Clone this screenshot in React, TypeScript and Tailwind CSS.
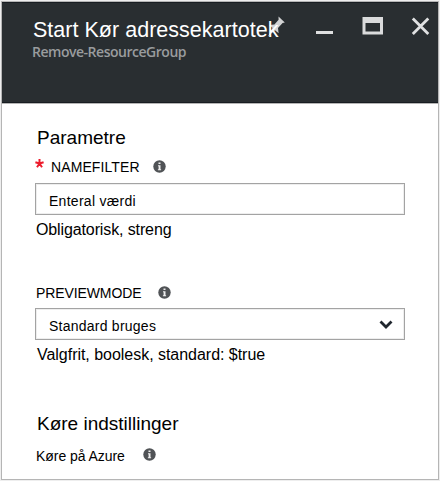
function InfoIcon() {
  return (
    <svg width="13" height="13" viewBox="0 0 13 13" className="block shrink-0">
      <circle cx="6.5" cy="6.5" r="6.2" fill="#505356" />
      <path d="M5.5 2.5h2v1.6h-2zM5 5.2h2.5v4.1h.6v1H4.9v-1h.7V6.2H5z" fill="#eeeeee" />
    </svg>
  );
}

function Header() {
  return (
    <header className="relative h-[101px] border-y border-[#181d22] bg-[#292e31] pl-[31px] pt-[15px]">
      <div className="absolute left-[264px] top-[13px] flex">
        <svg width="166" height="24" viewBox="0 0 166 24" fill="none">
          <path d="M12.5 0.5l6.3 6-2.2.6-4.6 5 .6 5.2-3.6-3L2 20.5l4.6-8.6L3.2 9l5.2-.6 4.2-4.6z" fill="#d2d3d4" />
          <path d="M50 16.5h17" stroke="#dedfe0" strokeWidth="3" />
          <path d="M96.5 1h20.5v17.5H96.5zM99.5 7v8.5h14.5V7z" fill="#dadbdc" fillRule="evenodd" />
          <path d="M146.8 2.5l15.5 15.5M162.3 2.5l-15.5 15.5" stroke="#e0e1e2" strokeWidth="2.8" />
        </svg>
      </div>
      <h1 className="relative h-6 whitespace-nowrap text-[21.5px] leading-6 tracking-[0.02px] text-white">Start Kør adressekartotek</h1>
      <p className="-ml-px h-5 whitespace-nowrap font-['Open_Sans','Noto_Sans',sans-serif] text-[14px] font-semibold leading-5 tracking-[-0.48px] text-[#999c9e]">
        Remove-ResourceGroup
      </p>
    </header>
  );
}

export default function App() {
  return (
    <div className="h-[481px] w-[440px] bg-[#eeeeee] pl-px pt-px font-['Liberation_Sans',Arial,sans-serif] text-black">
      <div className="h-[479px] w-[438px] border border-[#b5b5b5] bg-white">
        <Header />
        <main className="border-t border-[#b5b5b5] pl-[33px]">
          <h2 className="mt-[22px] h-6 pl-[2px] text-[19px] leading-6">Parametre</h2>
          <div className="mt-[6px] flex h-5 items-center">
            <svg width="9" height="9" viewBox="0 0 9 9" className="mb-[5px]">
              <path d="M4.5 0v4.5M4.5 4.5L.4 3.2M4.5 4.5l4.1-1.3M4.5 4.5L2 8.2M4.5 4.5L7 8.2" stroke="#ec1c2c" strokeWidth="2" />
            </svg>
            <span className="ml-[7px] w-[102px] whitespace-nowrap pt-px text-[14px] leading-5 tracking-[0.1px]">NAMEFILTER</span>
            <InfoIcon />
          </div>
          <div className="mt-[7px] h-8 w-[370px] border border-[#a3a3a3] pl-[13px] pt-[7px] text-[14px] leading-5 tracking-[0.28px] shadow-[inset_0_0_0_1px_#eeeeee]">
            Enteral værdi
          </div>
          <p className="mt-[5px] h-5 pl-px text-[16px] leading-5 tracking-[-0.12px]">Obligatorisk, streng</p>
          <div className="mt-[42px] flex h-5 items-center">
            <span className="w-[123px] whitespace-nowrap pl-px pt-px text-[14px] leading-5 tracking-[-0.1px]">PREVIEWMODE</span>
            <InfoIcon />
          </div>
          <div className="mt-[6px] flex h-8 w-[370px] justify-between border border-[#a3a3a3] pl-[13px] pr-[11px] pt-[7px] text-[14px] leading-5 tracking-[0.24px] shadow-[inset_0_0_0_1px_#eeeeee]">
            Standard bruges
            <svg width="14" height="10" viewBox="0 0 14 10" className="mt-[4px]">
              <path d="M1.5 1.5L7 7l5.5-5.5" fill="none" stroke="#20262e" strokeWidth="2.8" />
            </svg>
          </div>
          <p className="mt-[5px] h-5 pl-[2px] text-[16px] leading-5 tracking-[-0.03px]">Valgfrit, boolesk, standard: $true</p>
          <h2 className="mt-[47px] h-6 pl-[2px] text-[19px] leading-6">Køre indstillinger</h2>
          <div className="mt-[8px] flex h-5 items-center">
            <span className="w-[108px] whitespace-nowrap pl-px pt-[3px] text-[14px] leading-5 tracking-[-0.05px]">Køre på Azure</span>
            <InfoIcon />
          </div>
        </main>
      </div>
    </div>
  );
}
